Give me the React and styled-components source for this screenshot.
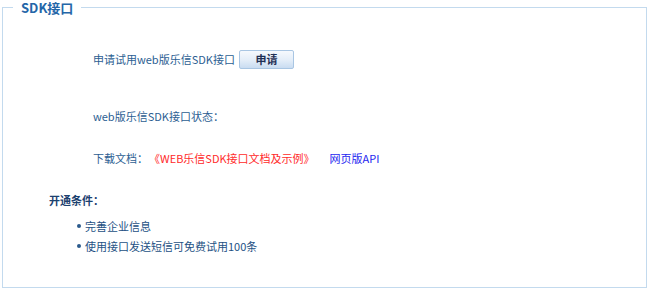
import React from "react";
import styled, { createGlobalStyle } from "styled-components";

const Global = createGlobalStyle`
  html, body { margin: 0; padding: 0; background: #fff; }
  body { font-family: "Noto Sans CJK SC", "Liberation Sans", sans-serif; font-size: 11px; }
`;

const Box = styled.fieldset`
  margin: 0 0 0 2px;
  width: 645px;
  height: 288px;
  box-sizing: border-box;
  border: 1px solid #c3daee;
  padding: 0;
  min-width: 0;
`;

const Legend = styled.legend`
  margin-left: 10px;
  padding: 0 8px;
  font-size: 13px;
  font-weight: bold;
  line-height: 15px;
  color: #2466a8;
`;

const Content = styled.div`
  padding-top: 34px;
  display: flex;
  flex-direction: column;
`;

const Row = styled.div`
  display: flex;
  align-items: center;
  height: 20px;
  padding-left: 90px;
  margin-top: ${(p) => p.$gap || 0}px;
  color: #2c5e92;
  line-height: 20px;
`;

const Button = styled.button`
  margin-left: 4px;
  width: 55px;
  height: 19px;
  padding: 0;
  border: 1px solid #a9c6e3;
  border-radius: 2px;
  background: linear-gradient(#f6f9fd, #e3edf8 55%, #c9dcf1);
  font-family: inherit;
  font-size: 11px;
  font-weight: bold;
  color: #1f2f55;
  line-height: 17px;
`;

const Doc = styled.span`
  color: #ff2a2a;
  margin-left: 1px;
`;

const Api = styled.span`
  color: #1e1ef0;
  margin-left: 15px;
`;

const Title = styled.div`
  margin-top: 22px;
  padding-left: 46px;
  font-weight: bold;
  color: #1c416f;
  line-height: 20px;
`;

const List = styled.ul`
  margin: 6px 0 0;
  padding: 0 0 0 82px;
  list-style: none;
`;

const Item = styled.li`
  position: relative;
  line-height: 20px;
  color: #245184;
  &::before {
    content: "";
    position: absolute;
    left: -8px;
    top: 8px;
    width: 4px;
    height: 4px;
    border-radius: 50%;
    background: #2b5a8c;
  }
`;

export default function App() {
  return (
    <>
      <Global />
      <Box>
        <Legend>SDK接口</Legend>
        <Content>
          <Row>
            申请试用web版乐信SDK接口
            <Button>申请</Button>
          </Row>
          <Row $gap={37}>web版乐信SDK接口状态：</Row>
          <Row $gap={22}>
            下载文档：<Doc>《WEB乐信SDK接口文档及示例》</Doc>
            <Api>网页版API</Api>
          </Row>
          <Title>开通条件：</Title>
          <List>
            <Item>完善企业信息</Item>
            <Item>使用接口发送短信可免费试用100条</Item>
          </List>
        </Content>
      </Box>
    </>
  );
}
